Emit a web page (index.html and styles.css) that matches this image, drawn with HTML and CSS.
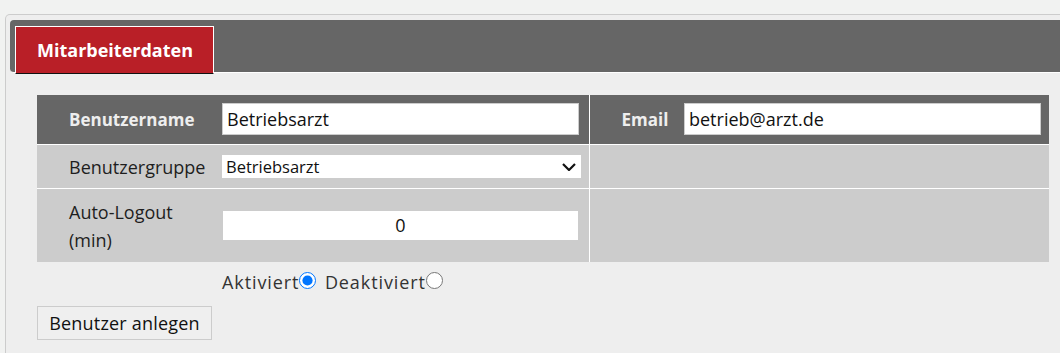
FILE: index.html
```html
<!DOCTYPE html>
<html lang="de">
<head>
    <meta charset="UTF-8">
    <meta name="viewport" content="width=device-width, initial-scale=1.0">
    <title>Mitarbeiterdaten</title>
    <link rel="stylesheet" href="styles.css">
</head>
<body>

    <div class="panel">
        <div class="tab-bar">
            <div class="tab">Mitarbeiterdaten</div>
        </div>

        <div class="tab-content">
            <table class="form-table">
                <colgroup>
                    <col class="col-label">
                    <col class="col-input">
                    <col class="col-label2">
                    <col class="col-input2">
                </colgroup>
                <tr class="row-head">
                    <th>Benutzername</th>
                    <td class="field"><input type="text" id="benutzername" value="Betriebsarzt"></td>
                    <th class="sep">Email</th>
                    <td class="field"><input type="text" id="email" value="betrieb@arzt.de"></td>
                </tr>
                <tr class="row-group">
                    <td class="label">Benutzergruppe</td>
                    <td class="field">
                        <span class="select-wrap">
                            <select id="gruppe">
                                <option>Betriebsarzt</option>
                                <option>Administrator</option>
                            </select>
                            <svg class="chevron" width="14" height="8" viewBox="0 0 14 8">
                                <polyline points="1,1 7,7 13,1" fill="none" stroke="#111" stroke-width="2.2"/>
                            </svg>
                        </span>
                    </td>
                    <td class="sep" colspan="2"></td>
                </tr>
                <tr class="row-logout">
                    <td class="label">Auto-Logout (min)</td>
                    <td class="field"><input type="text" id="logout" class="center" value="0"></td>
                    <td class="sep" colspan="2"></td>
                </tr>
            </table>

            <div class="radio-line">
                <label>Aktiviert<input type="radio" name="status" checked></label>
                <label>Deaktiviert<input type="radio" name="status"></label>
            </div>

            <button class="btn">Benutzer anlegen</button>
        </div>
    </div>

</body>
</html>
```

FILE: styles.css
```css
body {
    margin: 0;
    background-color: #f1f2f1;
    font-family: "Open Sans", sans-serif;
    overflow: hidden;
}
.panel {
    margin: 14px 0 0 5px;
    width: 1100px;
    height: 339px;
    background-color: #eeeeee;
    border: 1px solid #cccccc;
    border-bottom: none;
    border-radius: 5px 0 0 0;
    padding: 5px 0 0 4px;
    box-sizing: border-box;
}
.tab-bar {
    background-color: #666666;
    height: 53px;
    border-radius: 4px 0 0 4px;
    border-bottom: 1px solid #ffffff;
    padding: 6px 0 0 5px;
    box-sizing: border-box;
}
.tab {
    display: inline-block;
    background-color: #b91f27;
    color: #ffffff;
    font-weight: bold;
    font-size: 18px;
    height: 48px;
    line-height: 46px;
    width: 199px;
    padding-left: 21px;
    box-sizing: border-box;
    border: 1px solid #ffffff;
    border-bottom: 1px solid #111111;
}
.tab-content {
    padding: 22px 0 0 27px;
}
.form-table {
    width: 1012px;
    table-layout: fixed;
    border-collapse: collapse;
    background-color: #cccccc;
}
.col-label { width: 182px; }
.col-input { width: 370px; }
.col-label2 { width: 91px; }
.col-input2 { width: 369px; }
.form-table th, .form-table td {
    padding: 0;
    text-align: left;
    font-size: 18px;
}
.form-table th, .form-table .label {
    padding-left: 32px;
}
.row-head {
    background-color: #666666;
    height: 49px;
    border-bottom: 1px solid #ffffff;
}
.row-head th {
    color: #eeeeee;
    font-size: 17px;
}
.row-group {
    height: 44px;
    border-bottom: 1px solid #ffffff;
}
.row-logout {
    height: 74px;
}
.label {
    color: #1e1e1e;
    line-height: 28px;
    padding-top: 2px !important;
}
.sep {
    border-left: 1px solid #ffffff;
}
.field {
    padding-left: 3px !important;
}
.field input {
    width: 357px;
    height: 32px;
    box-sizing: border-box;
    border: 1px solid #cccccc;
    padding: 0 4px;
    font-family: "Open Sans", sans-serif;
    font-size: 18px;
    color: #111111;
    background-color: #ffffff;
}
.row-head .sep + .field input {
    margin-left: 1px;
}
.field input.center {
    text-align: center;
    height: 31px;
}
.select-wrap {
    position: relative;
    display: inline-block;
}
.field select {
    display: block;
    width: 359px;
    height: 23px;
    border: none;
    padding: 0 4px;
    font-family: "Open Sans", sans-serif;
    font-size: 16.5px;
    color: #111111;
    background-color: #ffffff;
    appearance: none;
    -webkit-appearance: none;
    border-radius: 0;
}
.chevron {
    position: absolute;
    right: 5px;
    top: 8px;
    pointer-events: none;
}
.radio-line {
    padding: 8px 0 0 185px;
    height: 36px;
    box-sizing: border-box;
    color: #333333;
    font-size: 18px;
    letter-spacing: 0.9px;
}
.radio-line label {
    margin-right: 3px;
}
.radio-line input {
    width: 17px;
    height: 17px;
    margin: 0;
    vertical-align: baseline;
}
.btn {
    margin-top: 8px;
    height: 34px;
    width: 175px;
    background-color: #efefef;
    border: 1px solid #cccccc;
    font-family: "Open Sans", sans-serif;
    font-size: 18px;
    letter-spacing: 0.2px;
    color: #111111;
    padding: 0;
}
```
